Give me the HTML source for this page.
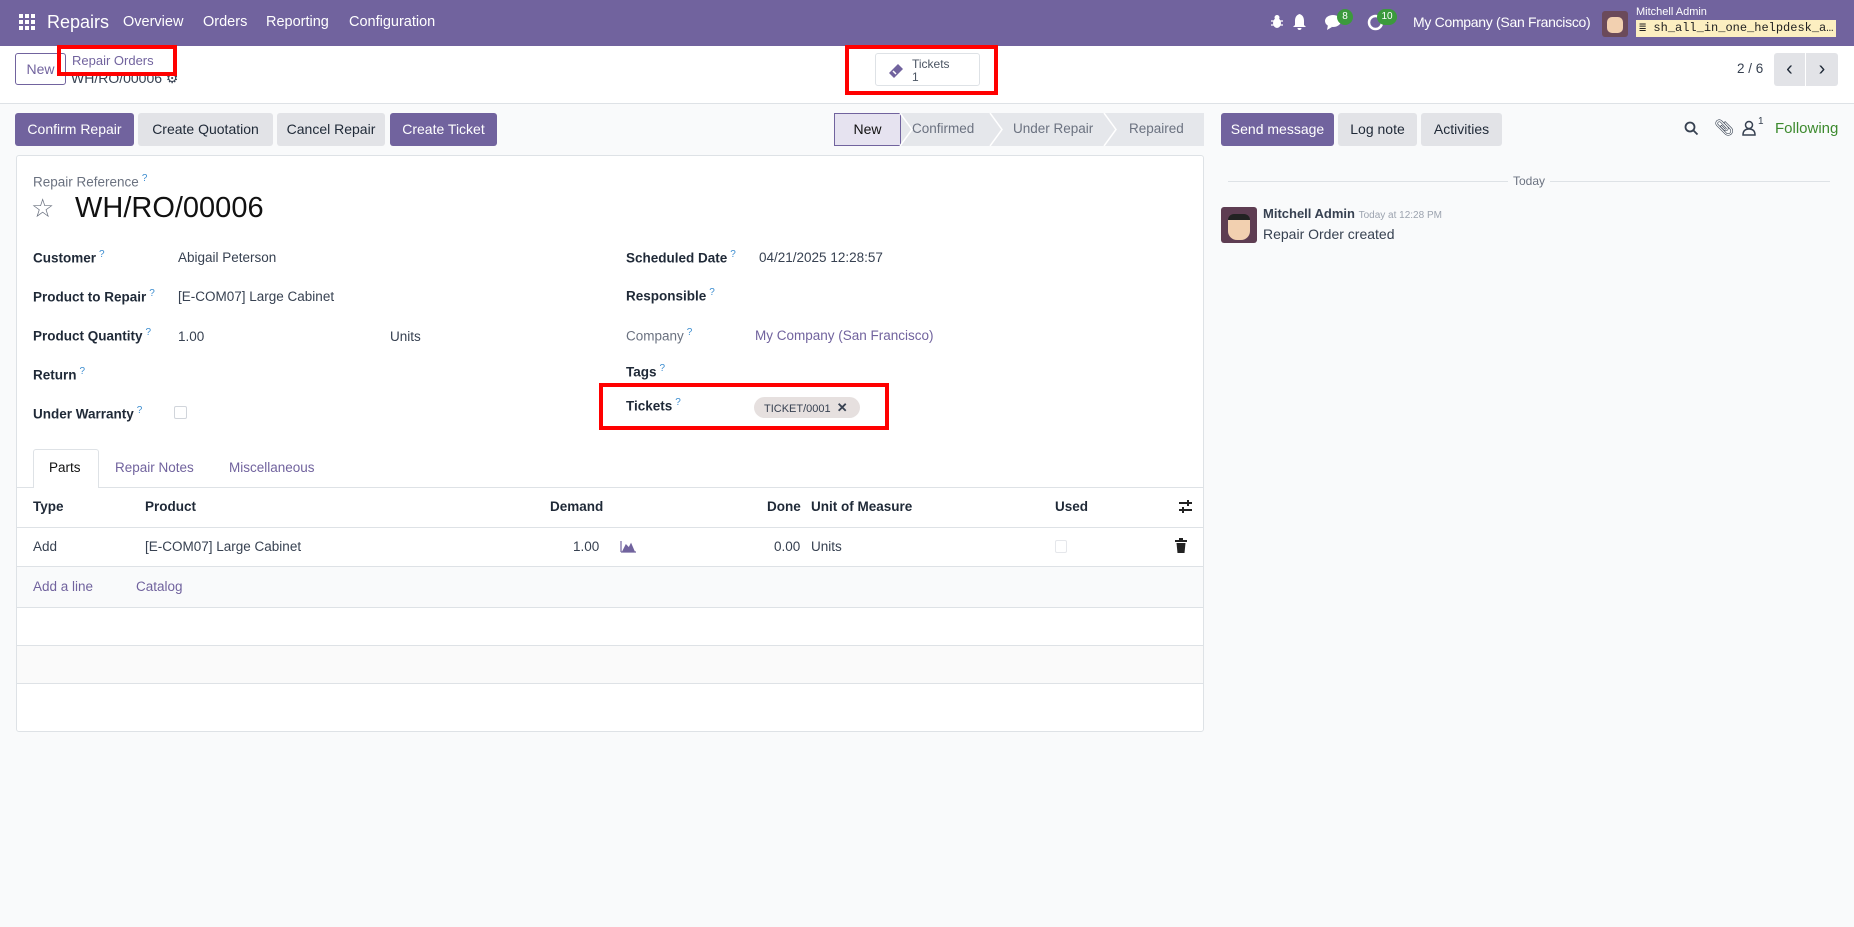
<!DOCTYPE html>
<html><head><meta charset="utf-8"><style>
*{box-sizing:border-box;margin:0;padding:0}
body{width:1854px;height:927px;background:#f9fafb;font-family:"Liberation Sans",sans-serif;font-size:13.5px;color:#374151;position:relative;overflow:hidden}
.a{position:absolute;white-space:nowrap}
.nav{position:absolute;left:0;top:0;width:1854px;height:46px;background:#71639e;color:#fff}
.nav .a{color:#fff;font-size:14.5px;top:14px}
.cp{position:absolute;left:0;top:46px;width:1854px;height:58px;background:#fff;border-bottom:1px solid #dee2e6}
.btn{position:absolute;height:33px;line-height:33px;text-align:center;border-radius:3px;font-size:14px}
.pri{background:#71639e;color:#fff}
.sec{background:#e2e3e7;color:#1f2937}
.red{position:absolute;border:4px solid #f00}
.sheet{position:absolute;left:16px;top:155px;width:1188px;height:577px;background:#fff;border:1px solid #dee2e6;border-radius:3px}
.lbl{font-weight:bold;color:#1f2937}
.q{color:#3e8ed0;font-size:10px;vertical-align:super;font-weight:normal;margin-left:3px}
.hl{position:absolute;left:17px;width:1186px;height:1px;background:#dee2e6}
.st{position:absolute;top:113px;height:33px;line-height:33px;background:#e5e7eb;color:#6b7280;font-size:14px}
</style></head><body>
<div class="nav">
<svg class="a" style="left:19px;top:14px" width="16" height="16" viewBox="0 0 16 16" fill="#fff"><rect x="0" y="0" width="4" height="4"/><rect x="6" y="0" width="4" height="4"/><rect x="12" y="0" width="4" height="4"/><rect x="0" y="6" width="4" height="4"/><rect x="6" y="6" width="4" height="4"/><rect x="12" y="6" width="4" height="4"/><rect x="0" y="12" width="4" height="4"/><rect x="6" y="12" width="4" height="4"/><rect x="12" y="12" width="4" height="4"/></svg>
<div class="a" style="left:47px;top:12px;font-size:18px">Repairs</div>
<div class="a" style="left:123px">Overview</div>
<div class="a" style="left:203px">Orders</div>
<div class="a" style="left:266px">Reporting</div>
<div class="a" style="left:349px">Configuration</div>
<svg class="a" style="left:1271px;top:15px" width="12" height="14" fill="#fff"><ellipse cx="6" cy="8" rx="4" ry="5"/><circle cx="6" cy="2.5" r="2.5"/><path d="M0 6h12M0 10h12" stroke="#fff" stroke-width="1.3"/></svg>
<svg class="a" style="left:1292px;top:14px" width="15" height="17" viewBox="0 0 15 17" fill="#fff"><path d="M7.5 0C4 1 3 4 3 7v4L1 13h13l-2-2V7c0-3-1-6-4.5-7zM5.5 14h4a2 2 0 01-4 0z"/></svg>
<svg class="a" style="left:1325px;top:14px" width="18" height="16" viewBox="0 0 18 16" fill="#fff"><ellipse cx="8" cy="7" rx="8" ry="6"/><path d="M3 11l-1 5 5-3z"/></svg>
<div class="a" style="left:1337px;top:9px;background:#3c9a3c;border-radius:9px;width:16px;height:16px;font-size:10px;text-align:center;line-height:16px">8</div>
<svg class="a" style="left:1367px;top:14px" width="17" height="17" viewBox="0 0 17 17" fill="none" stroke="#fff" stroke-width="2.5"><circle cx="8.5" cy="8.5" r="6.5"/></svg>
<div class="a" style="left:1377px;top:9px;background:#3c9a3c;border-radius:9px;width:20px;height:16px;font-size:10px;text-align:center;line-height:16px">10</div>
<div class="a" style="left:1413px;top:14px;font-size:14px!important;letter-spacing:-0.3px">My Company (San Francisco)</div>
<div class="a" style="left:1602px;top:11px;width:26px;height:26px;background:#6b4a5a;border-radius:3px"><div style="margin:6px 5px;width:16px;height:16px;background:#f2d0b0;border-radius:5px"></div></div>
<div class="a" style="left:1636px;top:6px;font-size:11px">Mitchell Admin</div>
<div class="a" style="left:1636px;top:20px;width:200px;height:17px;background:#fcefc1;color:#222;font-family:'Liberation Mono',monospace;font-size:12px;line-height:17px;padding-left:3px">≣ sh_all_in_one_helpdesk_a…</div>
</div>
<div class="cp"></div>
<div class="btn" style="left:15px;top:53px;width:51px;height:32px;line-height:30px;border:1px solid #71639e;color:#71639e;background:#fff">New</div>
<div class="a" style="left:72px;top:53px;font-size:13px;color:#71639e">Repair Orders</div>
<div class="a" style="left:71px;top:70px;font-size:14px;color:#374151">WH/RO/00006 ⚙</div>
<div class="red" style="left:57px;top:45px;width:120px;height:31px"></div>
<div class="a" style="left:875px;top:53px;width:105px;height:33px;border:1px solid #dee2e6;border-radius:3px;background:#fff"></div>
<svg class="a" style="left:886px;top:61px" width="20" height="20" viewBox="0 0 20 20"><path d="M3 12L12 3l5 5-9 9z" fill="#71639e"/><path d="M7 10l3 3" stroke="#fff" stroke-width="1.5"/></svg>
<div class="a" style="left:912px;top:57px;font-size:12px;color:#4b5563">Tickets</div>
<div class="a" style="left:912px;top:70px;font-size:12px;color:#4b5563">1</div>
<div class="red" style="left:845px;top:45px;width:153px;height:50px"></div>
<div class="a" style="left:1737px;top:61px;color:#374151">2 / 6</div>
<div class="btn sec" style="left:1774px;top:53px;width:31px;height:33px;border-radius:3px 0 0 3px;font-size:20px">‹</div>
<div class="btn sec" style="left:1806px;top:53px;width:32px;height:33px;border-radius:0 3px 3px 0;font-size:20px">›</div>

<div class="btn pri" style="left:15px;top:113px;width:119px">Confirm Repair</div>
<div class="btn sec" style="left:138px;top:113px;width:135px">Create Quotation</div>
<div class="btn sec" style="left:277px;top:113px;width:108px">Cancel Repair</div>
<div class="btn pri" style="left:390px;top:113px;width:107px">Create Ticket</div>

<div class="st" style="left:834px;width:370px"></div>
<div class="st" style="left:834px;width:67px;background:#e6e3f0;border:1px solid #71639e;color:#111;text-align:center;line-height:31px">New</div>
<div class="a" style="left:912px;top:121px;color:#6b7280">Confirmed</div>
<div class="a" style="left:1013px;top:121px;color:#6b7280">Under Repair</div>
<div class="a" style="left:1129px;top:121px;color:#6b7280">Repaired</div>
<svg class="a" style="left:890px;top:113px" width="320" height="33"><g fill="none" stroke="#fff" stroke-width="1.5"><path d="M10 0l12 16.5L10 33"/><path d="M100 0l12 16.5L100 33"/><path d="M214 0l12 16.5L214 33"/></g></svg>

<div class="btn pri" style="left:1221px;top:113px;width:113px">Send message</div>
<div class="btn sec" style="left:1338px;top:113px;width:79px">Log note</div>
<div class="btn sec" style="left:1421px;top:113px;width:81px">Activities</div>
<svg class="a" style="left:1684px;top:121px" width="15" height="15" fill="none" stroke="#374151" stroke-width="1.8"><circle cx="6" cy="6" r="4.5"/><path d="M9.5 9.5l4 4"/></svg>
<div class="a" style="left:1714px;top:118px;font-size:16px;color:#374151">📎︎</div>
<svg class="a" style="left:1742px;top:120px" width="14" height="16" fill="none" stroke="#374151" stroke-width="1.5"><circle cx="7" cy="5" r="3.5"/><path d="M1 15c0-4 2-6 6-6s6 2 6 6z"/></svg>
<div class="a" style="left:1758px;top:116px;font-size:10px">1</div>
<div class="a" style="left:1775px;top:120px;color:#3d8a2e;font-size:15px">Following</div>

<div class="sheet"></div>
<div class="a" style="left:33px;top:173px;color:#6b7280">Repair Reference<span class="q">?</span></div>
<div class="a" style="left:31px;top:193px;font-size:26px;color:#6b7280">☆</div>
<div class="a" style="left:75px;top:192px;font-size:29px;color:#111">WH/RO/00006</div>

<div class="a lbl" style="left:33px;top:249px">Customer<span class="q">?</span></div>
<div class="a" style="left:178px;top:250px">Abigail Peterson</div>
<div class="a lbl" style="left:33px;top:288px">Product to Repair<span class="q">?</span></div>
<div class="a" style="left:178px;top:289px">[E-COM07] Large Cabinet</div>
<div class="a lbl" style="left:33px;top:327px">Product Quantity<span class="q">?</span></div>
<div class="a" style="left:178px;top:329px">1.00</div>
<div class="a" style="left:390px;top:329px">Units</div>
<div class="a lbl" style="left:33px;top:366px">Return<span class="q">?</span></div>
<div class="a lbl" style="left:33px;top:405px">Under Warranty<span class="q">?</span></div>
<div class="a" style="left:174px;top:406px;width:13px;height:13px;border:1px solid #d1d5db;border-radius:2px"></div>

<div class="a lbl" style="left:626px;top:249px">Scheduled Date<span class="q">?</span></div>
<div class="a" style="left:759px;top:250px">04/21/2025 12:28:57</div>
<div class="a lbl" style="left:626px;top:287px">Responsible<span class="q">?</span></div>
<div class="a" style="left:626px;top:327px;color:#6b7280">Company<span class="q">?</span></div>
<div class="a" style="left:755px;top:328px;color:#71639e">My Company (San Francisco)</div>
<div class="a lbl" style="left:626px;top:363px">Tags<span class="q">?</span></div>
<div class="a lbl" style="left:626px;top:397px">Tickets<span class="q">?</span></div>
<div class="a" style="left:754px;top:397px;width:106px;height:21px;background:#e6e0df;border-radius:11px;font-size:11px;line-height:21px;padding-left:10px;color:#374151">TICKET/0001 <b style="font-size:13px;margin-left:3px">✕</b></div>
<div class="red" style="left:599px;top:383px;width:290px;height:47px"></div>

<div class="hl" style="top:487px"></div>
<div class="a" style="left:33px;top:449px;width:66px;height:39px;background:#fff;border:1px solid #dee2e6;border-bottom:none;border-radius:3px 3px 0 0"></div>
<div class="a" style="left:49px;top:460px;color:#111">Parts</div>
<div class="a" style="left:115px;top:460px;color:#71639e">Repair Notes</div>
<div class="a" style="left:229px;top:460px;color:#71639e">Miscellaneous</div>

<div class="a lbl" style="left:33px;top:499px">Type</div>
<div class="a lbl" style="left:145px;top:499px">Product</div>
<div class="a lbl" style="left:550px;top:499px">Demand</div>
<div class="a lbl" style="left:767px;top:499px">Done</div>
<div class="a lbl" style="left:811px;top:499px">Unit of Measure</div>
<div class="a lbl" style="left:1055px;top:499px">Used</div>
<svg class="a" style="left:1178px;top:499px" width="15" height="15" stroke="#222" stroke-width="2"><path d="M1 4h13M1 11h13"/><path d="M10 1v6M5 8v6"/></svg>
<div class="hl" style="top:527px"></div>
<div class="a" style="left:33px;top:539px">Add</div>
<div class="a" style="left:145px;top:539px">[E-COM07] Large Cabinet</div>
<div class="a" style="left:573px;top:539px">1.00</div>
<svg class="a" style="left:620px;top:540px" width="16" height="13"><path d="M1 12V1M1 12h15M3 11l3-6 3 3 2-4 3 7z" fill="#71639e" stroke="#71639e" stroke-width="1.2"/></svg>
<div class="a" style="left:774px;top:539px">0.00</div>
<div class="a" style="left:811px;top:539px">Units</div>
<div class="a" style="left:1055px;top:540px;width:12px;height:13px;border:1px solid #e5e7eb;border-radius:2px"></div>
<svg class="a" style="left:1175px;top:538px" width="12" height="15" fill="#222"><rect x="0" y="2" width="12" height="2"/><rect x="4" y="0" width="4" height="2"/><path d="M1.5 5h9l-1 10h-7z"/></svg>
<div class="hl" style="top:566px"></div>
<div class="a" style="left:17px;top:567px;width:1186px;height:40px;background:#f9fafb"></div>
<div class="a" style="left:33px;top:579px;color:#71639e">Add a line</div>
<div class="a" style="left:136px;top:579px;color:#71639e">Catalog</div>
<div class="hl" style="top:607px"></div>
<div class="a" style="left:17px;top:646px;width:1186px;height:37px;background:#fafafa"></div>
<div class="hl" style="top:645px"></div>
<div class="hl" style="top:683px"></div>

<div class="a" style="left:1228px;top:181px;width:280px;height:1px;background:#dee2e6"></div>
<div class="a" style="left:1513px;top:174px;color:#6b7280;font-size:12px">Today</div>
<div class="a" style="left:1550px;top:181px;width:280px;height:1px;background:#dee2e6"></div>
<div class="a" style="left:1221px;top:207px;width:36px;height:36px;background:#5e3d52;border-radius:3px"><div style="margin:7px 7px;width:22px;height:26px;background:#f2d0b0;border-radius:6px 6px 9px 9px;border-top:6px solid #222"></div></div>
<div class="a" style="left:1263px;top:206px;font-weight:bold;font-size:13px;color:#374151">Mitchell Admin <span style="font-weight:normal;font-size:10px;color:#9ca3af">Today at 12:28 PM</span></div>
<div class="a" style="left:1263px;top:226px;font-size:14px;color:#374151">Repair Order created</div>
</body></html>
